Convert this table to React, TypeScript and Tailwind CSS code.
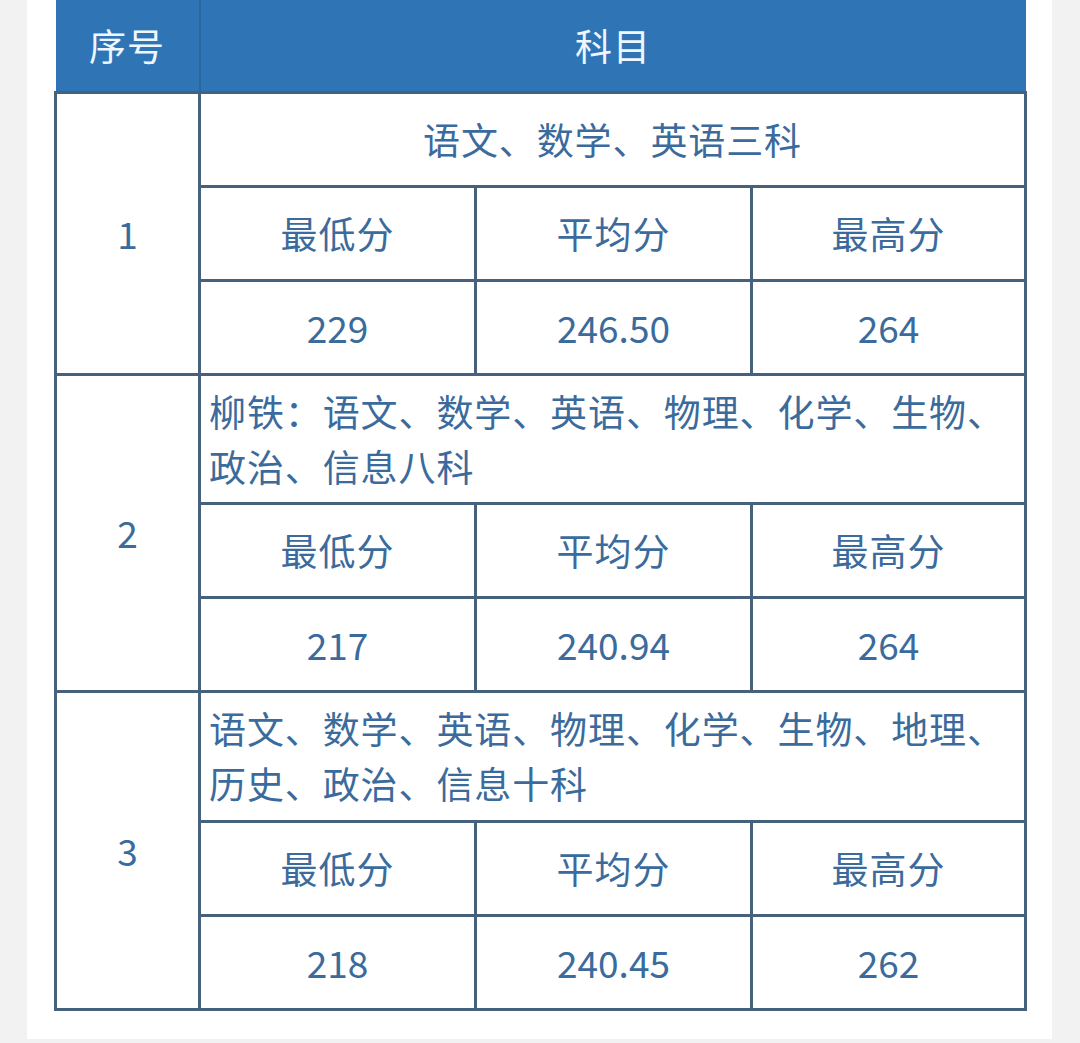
const groups = [
  {
    no: "1",
    subject: "语文、数学、英语三科",
    center: true,
    subjectH: "h-[94px]",
    scores: ["229", "246.50", "264"],
  },
  {
    no: "2",
    subject: "柳铁：语文、数学、英语、物理、化学、生物、政治、信息八科",
    center: false,
    subjectH: "h-[129px]",
    scores: ["217", "240.94", "264"],
  },
  {
    no: "3",
    subject: "语文、数学、英语、物理、化学、生物、地理、历史、政治、信息十科",
    center: false,
    subjectH: "h-[130px]",
    scores: ["218", "240.45", "262"],
  },
];

const labels = ["最低分", "平均分", "最高分"];

const cell = "border-[3px] border-[#46617b] text-center align-middle";

export default function App() {
  return (
    <div
      className="min-h-screen bg-[#f2f2f2]"
      style={{ fontFamily: '"Noto Sans CJK SC", "Noto Sans", sans-serif' }}
    >
      <div className="ml-[27px] w-[1025px] bg-white pl-[27px] pb-[28px]">
        <table className="w-[970px] table-fixed border-collapse text-[37px] leading-[55px] text-[#3b6b9c]">
          <colgroup>
            <col className="w-[144px]" />
            <col className="w-[276px]" />
            <col className="w-[276px]" />
            <col className="w-[274px]" />
          </colgroup>
          <thead>
            <tr className="h-[92px] bg-[#2f75b5] text-[#eef7ff] tracking-[1px]">
              <th className="border-r-2 border-[#2a66a0] font-normal">序号</th>
              <th colSpan={3} className="font-normal">
                科目
              </th>
            </tr>
          </thead>
          <tbody>
            {groups.map((g) => (
              <>
                <tr key={g.no + "s"} className={g.subjectH}>
                  <td rowSpan={3} className={cell}>
                    {g.no}
                  </td>
                  <td
                    colSpan={3}
                    className={
                      "border-[3px] border-[#46617b] align-middle tracking-[0.9px] " +
                      (g.center ? "text-center" : "px-[8px] text-left")
                    }
                  >
                    {g.subject}
                  </td>
                </tr>
                <tr key={g.no + "l"} className="h-[94px]">
                  {labels.map((l) => (
                    <td key={l} className={cell + " tracking-[1px]"}>
                      {l}
                    </td>
                  ))}
                </tr>
                <tr key={g.no + "v"} className="h-[94px]">
                  {g.scores.map((s, i) => (
                    <td key={i} className={cell}>
                      {s}
                    </td>
                  ))}
                </tr>
              </>
            ))}
          </tbody>
        </table>
      </div>
    </div>
  );
}
